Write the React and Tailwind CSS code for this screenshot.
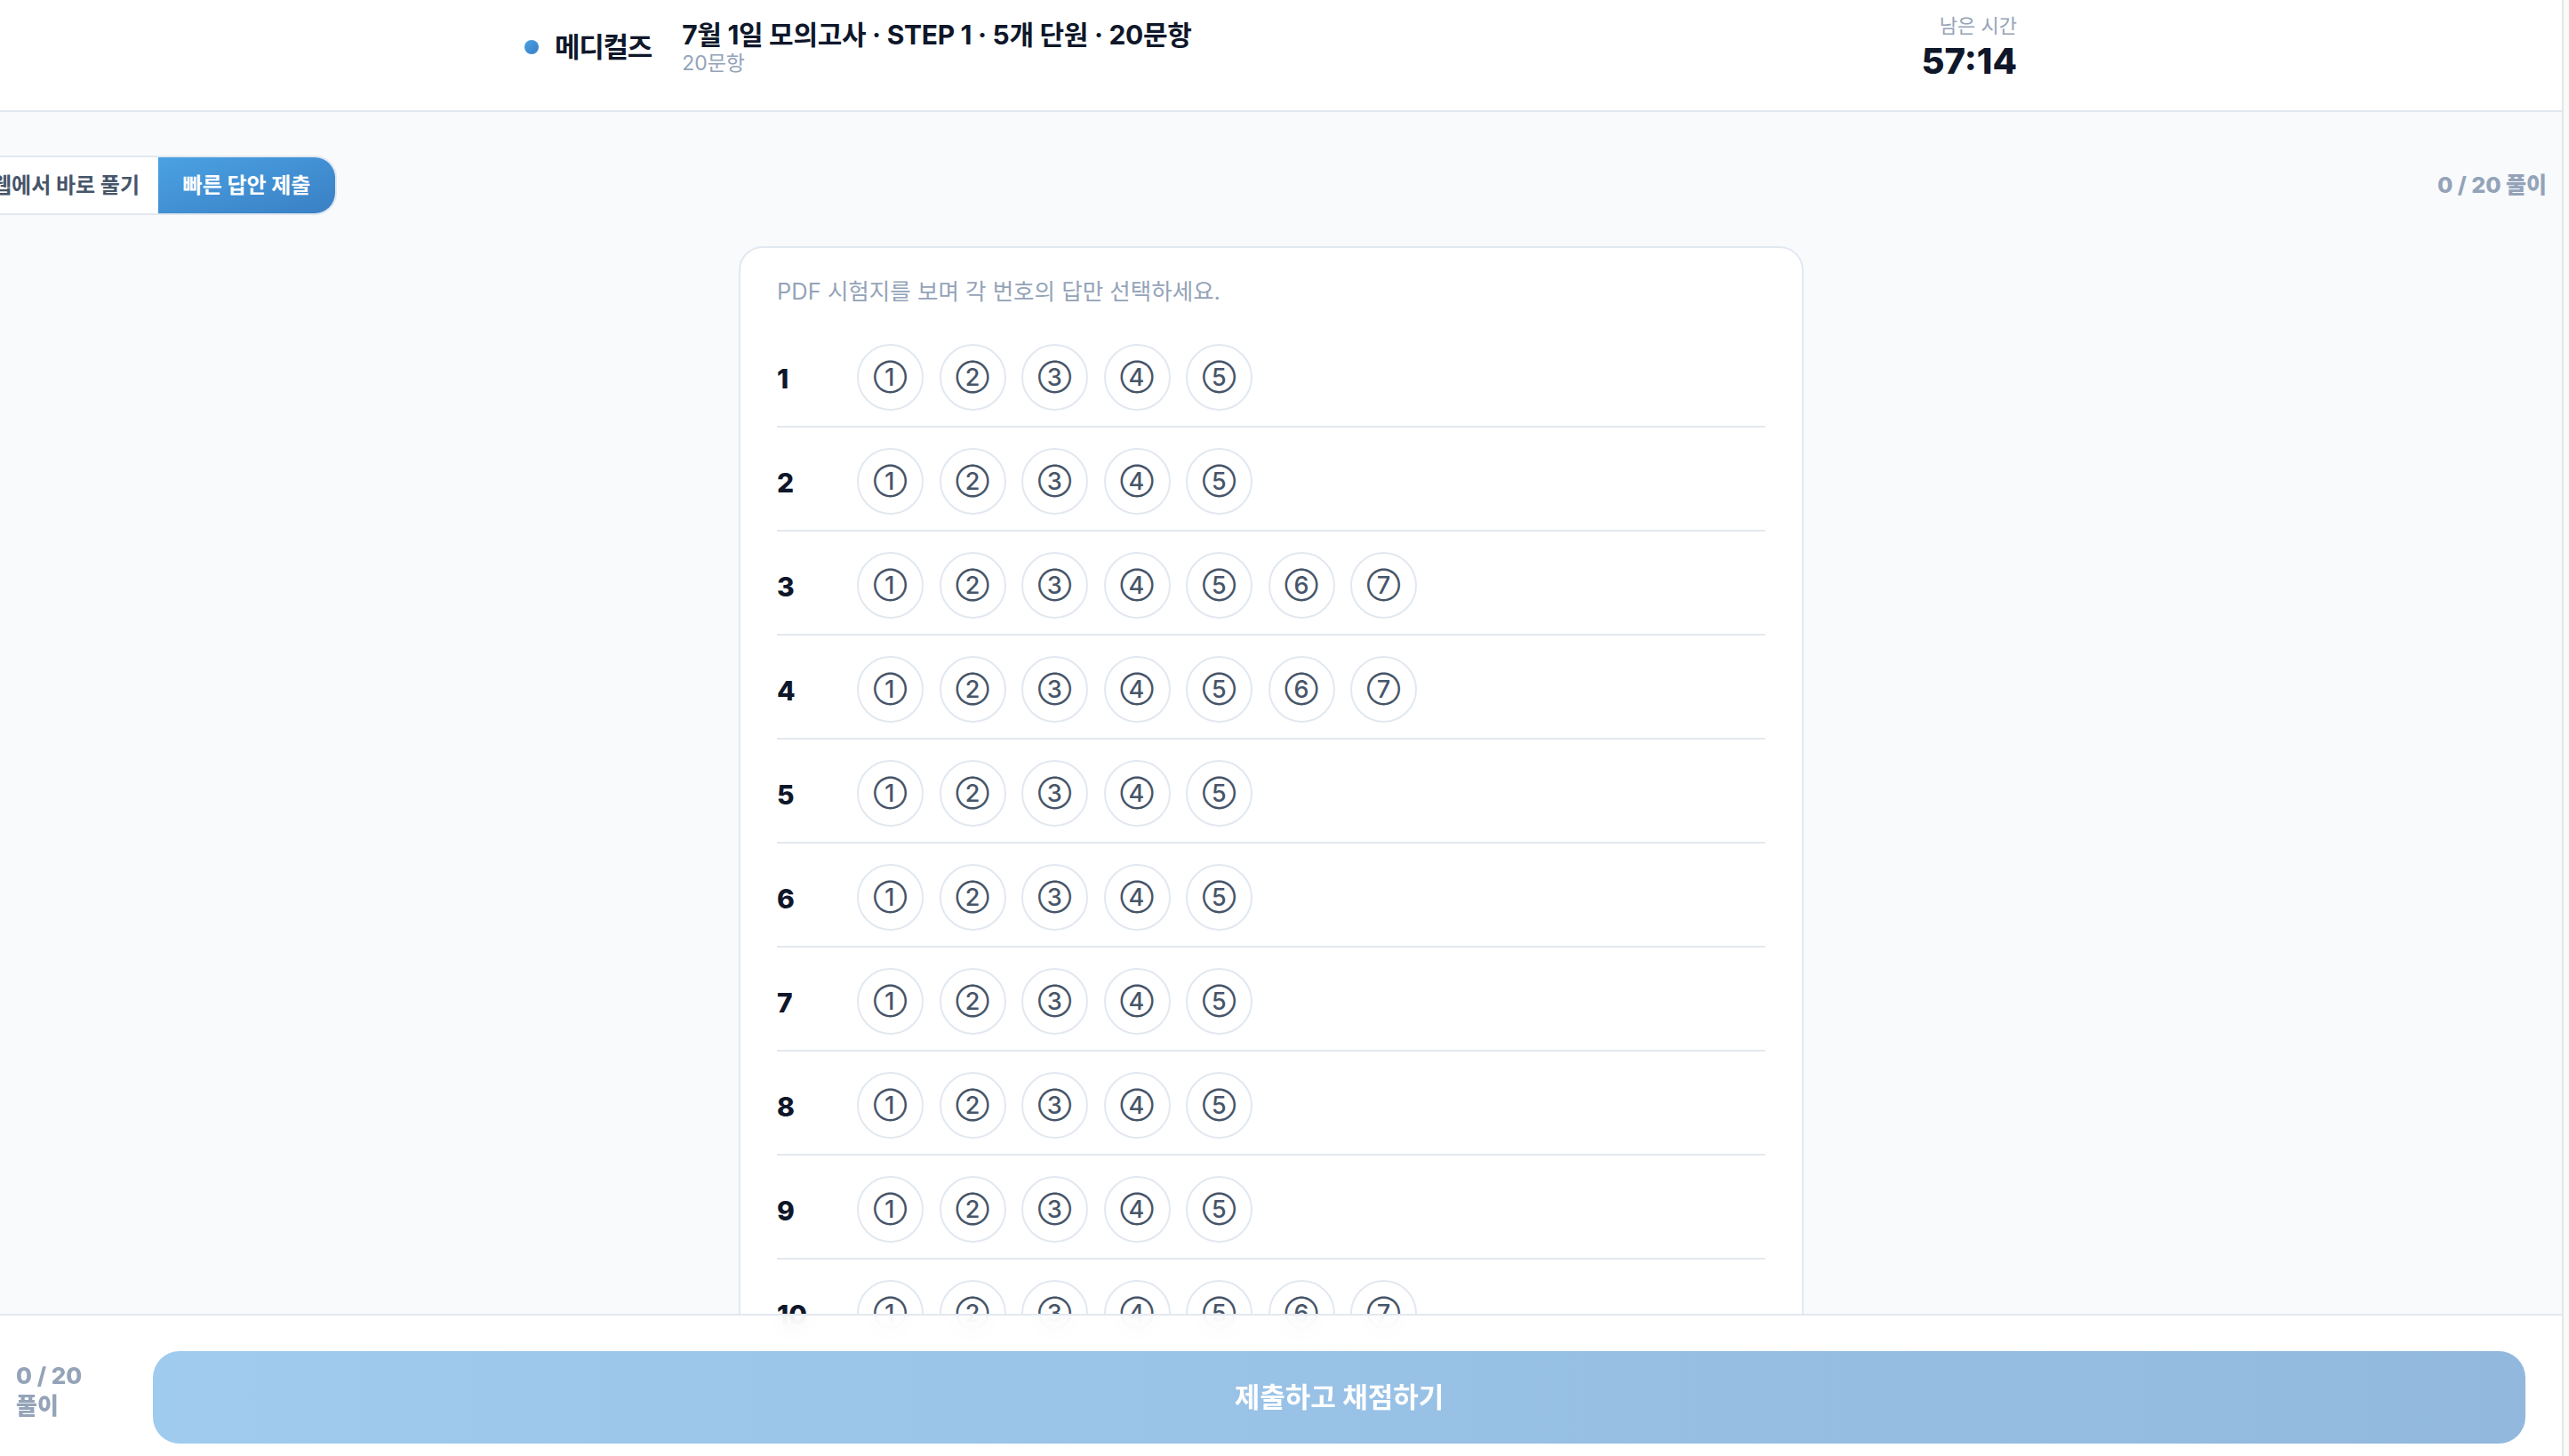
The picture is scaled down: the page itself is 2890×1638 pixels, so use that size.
import React from "react";

const rows = [5, 5, 7, 7, 5, 5, 5, 5, 5, 7, 5, 5, 5, 5, 5, 5, 5, 5, 5, 5];
const circ = ["①", "②", "③", "④", "⑤", "⑥", "⑦"];

export default function App() {
  return (
    <div
      className="flex h-[1638px] w-[2890px] overflow-hidden"
      style={{ fontFamily: "Inter, 'Noto Sans CJK KR', sans-serif" }}
    >
      <div className="relative h-full w-[2882px] overflow-hidden bg-[#f8fafc]">
        {/* Header */}
        <header className="h-[126px] border-b-2 border-[#e2e8f0] bg-white">
          <div className="ml-[590px] flex h-[106px] w-[1679px] items-center justify-between">
            <div className="flex items-center">
              <span className="h-4 w-4 rounded-full bg-linear-to-br from-[#4aa2e3] to-[#3a7fc4]" />
              <span className="ml-[18px] text-[31px] font-bold tracking-[-0.04em] text-[#0f172a]">
                메디컬즈
              </span>
              <div className="ml-[34px] flex flex-col">
                <div className="text-[30px] font-bold leading-[36px] tracking-[-0.01em] text-[#0f172a]">
                  7월 1일 모의고사 · STEP 1 · 5개 단원 · 20문항
                </div>
                <div className="text-[23px] leading-[28px] text-[#94a3b8]">20문항</div>
              </div>
            </div>
            <div className="flex flex-col items-end">
              <div className="text-[22px] leading-[28px] text-[#94a3b8]">남은 시간</div>
              <div className="mt-1 text-[40px] font-extrabold leading-[44px] text-[#0f172a]">57:14</div>
            </div>
          </div>
        </header>

        {/* Toolbar */}
        <div className="mt-[49px] flex h-[67px] items-center justify-between pr-[17px]">
          <div className="-ml-[32px] flex h-[67px] overflow-hidden rounded-r-[25px] border-2 border-[#e2e8f0] bg-white">
            <div className="flex w-[208px] items-center justify-center text-[24px] font-bold text-[#475569]">
              웹에서 바로 풀기
            </div>
            <div className="flex w-[199px] items-center justify-center bg-linear-to-br from-[#4aa2e3] to-[#3a7fc4] text-[24px] font-bold text-white">
              빠른 답안 제출
            </div>
          </div>
          <div className="text-[25px] font-extrabold text-[#94a3b8]">0 / 20 풀이</div>
        </div>

        {/* Card */}
        <div className="ml-[831px] mt-[35px] w-[1198px] rounded-[27px] border-2 border-[#e2e8f0] bg-white px-[41px] pt-[31px]">
          <div className="mb-[18px] text-[25.5px] leading-[36px] text-[#94a3b8]">
            PDF 시험지를 보며 각 번호의 답만 선택하세요.
          </div>
          {rows.map((n, i) => (
            <div
              key={i}
              className="flex items-center border-b-2 border-[#e2e8f0] pb-[17px] pt-[23px]"
            >
              <div className="w-[72px] pt-[4px] text-[30px] font-extrabold text-[#0f172a]">{i + 1}</div>
              <div className="ml-[18px] flex gap-[17.5px]">
                {circ.slice(0, n).map((c) => (
                  <div
                    key={c}
                    className="flex h-[75px] w-[75px] items-center justify-center rounded-full border-2 border-[#e2e8f0] bg-white text-[27px] font-medium leading-none text-[#475569]"
                  >
                    {c}
                  </div>
                ))}
              </div>
            </div>
          ))}
        </div>

        {/* Bottom bar overlay */}
        <div className="absolute left-0 right-0 top-[1478px] flex items-center border-t-2 border-[#e2e8f0] bg-white/90 pb-[40px] pl-[18px] pr-[41px] pt-[40px] backdrop-blur-md">
          <div className="mb-[14px] w-[154px] text-[26px] font-extrabold leading-[34px] text-[#94a3b8]">
            <div>0 / 20</div>
            <div>풀이</div>
          </div>
          <div className="flex h-[104px] flex-1 items-center justify-center rounded-[30px] bg-linear-to-r from-[#9fcbee] to-[#92b8de] text-[31px] font-bold text-white">
            제출하고 채점하기
          </div>
        </div>
      </div>
      <div className="h-full w-[8px] border-l-2 border-[#e6e6e6] bg-[#fafafa]" />
    </div>
  );
}
